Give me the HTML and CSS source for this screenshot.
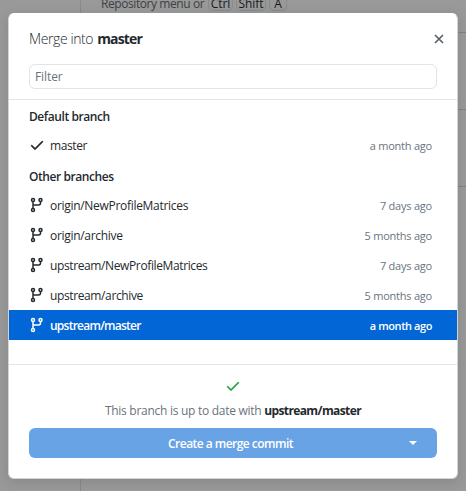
FILE: index.html
```html
<!DOCTYPE html>
<html lang="en">
<head>
<meta charset="utf-8">
<title>Merge into master</title>
<link rel="stylesheet" href="styles.css">
</head>
<body>
<svg width="0" height="0" class="defs">
  <symbol id="branch" viewBox="0 0 16 16"><g fill="none" stroke="currentColor" stroke-width="1.5"><circle cx="4" cy="3" r="1.5"/><circle cx="11.500" cy="3" r="1.5"/><circle cx="4" cy="13" r="1.5"/><path d="M4 4.500v7M11.500 4.500v1.500a2 2 0 0 1-2 2H4"/></g></symbol>
  <symbol id="check" viewBox="0 0 16 16"><path d="M13.780 4.220a.75.75 0 0 1 0 1.060l-7.250 7.250a.75.75 0 0 1-1.060 0L2.220 9.280a.75.75 0 0 1 1.060-1.060L6 10.940l6.720-6.720a.75.75 0 0 1 1.060 0Z" stroke="currentColor" stroke-width=".35"/></symbol>
</svg>
<div class="backdrop">
  <div class="side"></div>
  <div class="page">
    <div class="hint"><span class="hint-text">Repository menu or</span><kbd class="ctrl">Ctrl</kbd><kbd class="shift">Shift</kbd><kbd class="a">A</kbd></div>
    <div class="rule first"></div>
    <div class="rule"></div>
    <div class="rule"></div>
  </div>
</div>
<main class="dialog">
  <header>
    <div class="title"><span class="t-into">Merge into</span><strong>master</strong></div>
    <svg class="close" viewBox="0 0 10 10"><path d="M1 1l8 8M9 1l-8 8"/></svg>
  </header>
  <div class="filter-wrap"><div class="filter">Filter</div></div>
  <section class="list">
    <div class="group">Default branch</div>
    <div class="row"><svg><use href="#check"/></svg><span class="name">master</span><time>a month ago</time></div>
    <div class="group">Other branches</div>
    <div class="row"><svg><use href="#branch"/></svg><span class="name wide">origin/NewProfileMatrices</span><time>7 days ago</time></div>
    <div class="row"><svg><use href="#branch"/></svg><span class="name wide">origin/archive</span><time>5 months ago</time></div>
    <div class="row"><svg><use href="#branch"/></svg><span class="name">upstream/NewProfileMatrices</span><time>7 days ago</time></div>
    <div class="row"><svg><use href="#branch"/></svg><span class="name">upstream/archive</span><time>5 months ago</time></div>
    <div class="row selected"><svg><use href="#branch"/></svg><span class="name">upstream/master</span><time>a month ago</time></div>
  </section>
  <footer>
    <svg class="ok"><use href="#check"/></svg>
    <p><span class="status">This branch is up to date with</span> <strong>upstream/master</strong></p>
    <div class="button"><span class="label">Create a merge commit</span><span class="drop"><i></i></span></div>
  </footer>
</main>
</body>
</html>
```
FILE: styles.css
```css
* { box-sizing: border-box; }
body {
  margin: 0;
  width: 466px;
  height: 491px;
  overflow: hidden;
  position: relative;
  background: #999;
  color: #24292e;
  font: 12px/18px "Open Sans", "Noto Sans", sans-serif;
}
.defs { position: absolute; }
.backdrop { position: absolute; inset: 0; display: flex; }
.side { width: 81px; border-right: 1px solid #88898b; }
.page { flex: 1; display: flex; flex-direction: column; }
.hint { height: 12px; padding-left: 20px; display: flex; margin-top: -5px; color: #3c4146; letter-spacing: -0.42px; white-space: nowrap; }
.hint-text { width: 104px; }
kbd { font: inherit; color: #16191c; height: 16px; line-height: 16px; border: 1px solid #87898c; border-radius: 5px; text-align: center; margin-left: 3px; letter-spacing: -0.1px; }
.ctrl { width: 25px; }
.shift { width: 30px; }
.a { width: 18px; }
.rule { height: 1px; flex: none; margin-top: 76px; background: #828385; }
.rule.first { margin-top: 25px; }
.dialog {
  position: absolute;
  left: 8px;
  top: 13px;
  width: 450px;
  height: 466px;
  background: #fff;
  border: 1px solid #d1d5da;
  border-top-color: #fff;
  border-radius: 6px;
  box-shadow: 0 3px 12px rgba(27, 31, 35, .15);
  overflow: hidden;
}
header { height: 50px; padding: 0 13px 0 20px; display: flex; align-items: center; justify-content: space-between; }
.title { font-size: 14px; line-height: 20px; display: flex; gap: 4px; }
.t-into { letter-spacing: -0.4px; font-weight: 300; }
.title strong { letter-spacing: -0.85px; }
.close { width: 10px; height: 10px; stroke: #586069; stroke-width: 1.7; fill: none; }
.filter-wrap { height: 36px; padding: 0 20px; border-bottom: 1px solid #e1e4e8; }
.filter { height: 25px; border: 1px solid #e1e4e8; border-radius: 6px; padding-left: 5px; line-height: 24px; color: #6a737d; letter-spacing: -0.1px; }
.list { height: 265px; border-bottom: 1px solid #e1e4e8; }
.group { height: 30px; line-height: 33px; padding-left: 20px; font-weight: 600; letter-spacing: -0.42px; }
.row { height: 30px; padding: 2px 25px 0 20px; display: flex; align-items: center; }
.row svg { width: 16px; height: 16px; fill: currentColor; margin-right: 5px; margin-top: -2px; }
.name { flex: 1; letter-spacing: -0.38px; }
.wide { letter-spacing: -0.3px; }
time { color: #6a737d; font-size: 11px; letter-spacing: -0.22px; margin-top: -1px; }
.selected { background: #0366d6; color: #fff; font-weight: 600; }
.selected .name { letter-spacing: -0.75px; }
.selected time { color: #fff; letter-spacing: -0.42px; }
footer { padding: 13px 20px 0; display: flex; flex-direction: column; align-items: center; }
.ok { width: 16px; height: 16px; fill: #28a745; color: #28a745; }
p { margin: 8px 0; color: #6a737d; letter-spacing: -0.28px; }
p strong { color: #24292e; letter-spacing: -0.6px; }
.button { width: 408px; height: 30px; border-radius: 6px; background: #68a3e6; color: #fff; display: flex; align-items: center; font-weight: 600; }
.label { flex: 1; text-align: center; padding: 1px 0 0 43px; letter-spacing: -0.53px; }
.drop { width: 48px; display: flex; justify-content: center; }
.drop i { border: 4px solid transparent; border-top-color: #fff; border-bottom: 0; }
```
